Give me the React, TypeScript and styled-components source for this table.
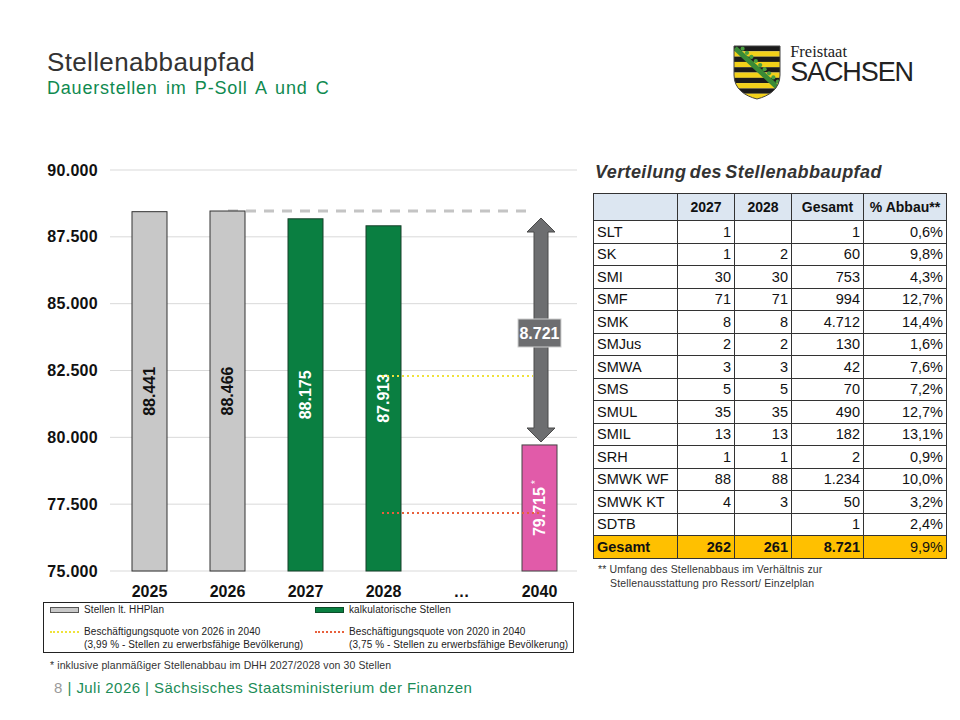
import styled, { createGlobalStyle } from "styled-components"

const GlobalStyle = createGlobalStyle`
  body {
    margin: 0;
    background: #fff;
    font-family: "Liberation Sans", Arial, sans-serif;
  }
`

const Page = styled.div`
  width: 960px;
  height: 720px;
  overflow: hidden;
  background: #fff;
  color: #333;
`

const Header = styled.header`
  height: 158px;
  box-sizing: border-box;
  padding: 47px 47px 0 47px;
  display: flex;
  justify-content: space-between;
  align-items: flex-start;
`

const TitleBlock = styled.div`
  display: flex;
  flex-direction: column;
`

const Title = styled.h1`
  margin: 0;
  font-size: 26px;
  line-height: 30px;
  font-weight: 400;
  letter-spacing: 0.35px;
  color: #333;
`

const Subtitle = styled.h2`
  margin: 0;
  font-size: 18px;
  line-height: 22px;
  font-weight: 400;
  letter-spacing: 0.8px;
  word-spacing: 2.5px;
  color: #0f8a50;
`

const Logo = styled.div`
  display: flex;
  align-items: flex-start;
  gap: 9px;
  margin-top: -2px;
`

const LogoText = styled.div`
  display: flex;
  flex-direction: column;
  color: #222;
`

const LogoSmall = styled.span`
  font-family: "Liberation Serif", serif;
  font-size: 16.5px;
  line-height: 13px;
`

const LogoBig = styled.span`
  margin-top: 3px;
  font-size: 27px;
  line-height: 23px;
  letter-spacing: -1.1px;
`

const Main = styled.main`
  display: flex;
  height: 521px;
  padding-left: 40px;
`

const ChartColumn = styled.div`
  width: 545px;
  display: flex;
  flex-direction: column;
`

const TableColumn = styled.div`
  width: 353px;
  margin-left: 8px;
  display: flex;
  flex-direction: column;
`

const ChartSvg = styled.svg`
  display: block;
  font-family: "Liberation Sans", Arial, sans-serif;
`

const AxisLabel = styled.text`
  font-size: 16px;
  font-weight: 700;
  fill: #111;
`

const BarLabel = styled.text<{ $light: boolean }>`
  font-size: 16px;
  font-weight: 700;
  fill: ${(p) => (p.$light ? "#fff" : "#111")};
`

const Legend = styled.div`
  margin: 2px 0 0 3px;
  width: 531px;
  height: 51px;
  box-sizing: border-box;
  border: 1.5px solid #222;
  display: grid;
  grid-template-columns: 265px 1fr;
  grid-template-rows: 13px 1fr;
  row-gap: 9px;
  padding: 0 0 0 6px;
  font-size: 10px;
  line-height: 13px;
  letter-spacing: 0.1px;
  color: #222;
  white-space: nowrap;
`

const LegendItem = styled.div`
  display: flex;
  align-items: flex-start;
  gap: 5px;
`

const Swatch = styled.span<{ $kind: "plan" | "calc" | "yellow" | "orange" }>`
  flex: none;
  width: 29px;
  box-sizing: border-box;
  margin-top: ${(p) => (p.$kind === "plan" || p.$kind === "calc" ? "4px" : "6px")};
  height: ${(p) => (p.$kind === "plan" || p.$kind === "calc" ? "6px" : "0")};
  background: ${(p) => (p.$kind === "plan" ? "#c8c8c8" : p.$kind === "calc" ? "#0a7f41" : "transparent")};
  border: ${(p) =>
    p.$kind === "plan"
      ? "1px solid #555"
      : p.$kind === "calc"
      ? "1px solid #0d4d2a"
      : "none"};
  border-top: ${(p) =>
    p.$kind === "yellow"
      ? "2px dotted #efe23a"
      : p.$kind === "orange"
      ? "2px dotted #e8603c"
      : undefined};
`

const Note = styled.div`
  margin-top: 6px;
  padding-left: 10px;
  font-size: 10.5px;
  line-height: 12px;
  letter-spacing: 0.1px;
  color: #333;
`

const TableTitle = styled.h3`
  margin: 3px 0 10px 2px;
  font-size: 18px;
  line-height: 22px;
  font-weight: 700;
  font-style: italic;
  letter-spacing: 0.4px;
  word-spacing: -2px;
  color: #333;
`

const Table = styled.table`
  width: 353px;
  border-collapse: collapse;
  table-layout: fixed;
  font-size: 14.5px;
  color: #111;
`

const Col = styled.col<{ $w: number }>`
  width: ${(p) => p.$w}px;
`

const HeadCell = styled.th`
  height: 26px;
  padding: 0 2px;
  border: 1px solid #333;
  background: #dce6f1;
  font-size: 14px;
  font-weight: 700;
  text-align: center;
  white-space: nowrap;
`

const Row = styled.tr<{ $total?: boolean }>`
  height: 22.5px;
  background: ${(p) => (p.$total ? "#ffc000" : "#fff")};
  font-weight: ${(p) => (p.$total ? 700 : 400)};
`

const Cell = styled.td<{ $left?: boolean; $plain?: boolean }>`
  padding: 0 3px;
  border: 1px solid #333;
  text-align: ${(p) => (p.$left ? "left" : "right")};
  font-weight: ${(p) => (p.$plain ? 400 : "inherit")};
  white-space: nowrap;
`

const TableNote = styled.div`
  margin-top: 4.5px;
  padding-left: 17px;
  text-indent: -12px;
  font-size: 10.5px;
  line-height: 13.5px;
  letter-spacing: 0.15px;
  color: #333;
`

const Footer = styled.footer`
  padding-left: 54px;
  font-size: 15px;
  line-height: 18px;
  letter-spacing: 0.45px;
  color: #1b8c57;
`

const PageNo = styled.span`
  color: #9a9a9a;
`

const Y0 = 571
const PX = 401 / 15000
const yOf = (v: number) => Y0 - (v - 75000) * PX
const fmt = (n: number) => String(n).replace(/\B(?=(\d{3})+(?!\d))/g, ".")

const TICKS = [90000, 87500, 85000, 82500, 80000, 77500, 75000]

type BarKind = "plan" | "calc" | "target"

const BARS: { year: string; value?: number; kind?: BarKind }[] = [
  { year: "2025", value: 88441, kind: "plan" },
  { year: "2026", value: 88466, kind: "plan" },
  { year: "2027", value: 88175, kind: "calc" },
  { year: "2028", value: 87913, kind: "calc" },
  { year: "…" },
  { year: "2040", value: 79715, kind: "target" },
]

const BAR_FILL: Record<BarKind, string> = {
  plan: "#c8c8c8",
  calc: "#0a7f41",
  target: "#e15ba9",
}

const BAR_STROKE: Record<BarKind, string> = {
  plan: "#333",
  calc: "#17402a",
  target: "#444",
}

const ROWS: string[][] = [
  ["SLT", "1", "", "1", "0,6%"],
  ["SK", "1", "2", "60", "9,8%"],
  ["SMI", "30", "30", "753", "4,3%"],
  ["SMF", "71", "71", "994", "12,7%"],
  ["SMK", "8", "8", "4.712", "14,4%"],
  ["SMJus", "2", "2", "130", "1,6%"],
  ["SMWA", "3", "3", "42", "7,6%"],
  ["SMS", "5", "5", "70", "7,2%"],
  ["SMUL", "35", "35", "490", "12,7%"],
  ["SMIL", "13", "13", "182", "13,1%"],
  ["SRH", "1", "1", "2", "0,9%"],
  ["SMWK WF", "88", "88", "1.234", "10,0%"],
  ["SMWK KT", "4", "3", "50", "3,2%"],
  ["SDTB", "", "", "1", "2,4%"],
]

function Wappen() {
  const stripes = Array.from({ length: 10 }, (_, i) => i)
  const leaves = Array.from({ length: 9 }, (_, i) => 0.1 + i * 0.1)
  return (
    <svg width="48" height="55" viewBox="0 0 48 55">
      <defs>
        <clipPath id="shield">
          <path d="M1 1 H47 V30 C47 44 36 51 24 54 C12 51 1 44 1 30 Z" />
        </clipPath>
      </defs>
      <g clipPath="url(#shield)">
        {stripes.map((i) => (
          <rect key={i} x="0" y={1 + i * 5.3} width="48" height="5.4" fill={i % 2 === 0 ? "#1b1b1b" : "#f3d11a"} />
        ))}
        <line x1="2" y1="3" x2="46" y2="44" stroke="#3a8a36" strokeWidth="5" />
        {leaves.map((t) => (
          <circle key={t} cx={2 + 44 * t + 3.2} cy={3 + 41 * t - 3.4} r="2.1" fill="#4a9e3f" />
        ))}
      </g>
      <path d="M1 1 H47 V30 C47 44 36 51 24 54 C12 51 1 44 1 30 Z" fill="none" stroke="#444" strokeWidth="1" />
    </svg>
  )
}

function Chart() {
  return (
    <ChartSvg width="545" height="442" viewBox="40 158 545 442">
      {TICKS.map((t) => (
        <g key={t}>
          <line x1="110" x2="577" y1={yOf(t)} y2={yOf(t)} stroke="#d9d9d9" strokeWidth="1" />
          <AxisLabel x="98" y={yOf(t) + 5.5} textAnchor="end" letterSpacing="0.3">
            {fmt(t)}
          </AxisLabel>
        </g>
      ))}

      <line x1="228" x2="528" y1="211" y2="211" stroke="#c4c4c4" strokeWidth="3" strokeDasharray="10 8" />

      {BARS.map((b, i) => {
        const cx = 149.5 + 78 * i
        if (b.value === undefined || !b.kind) return null
        const top = yOf(b.value)
        const mid = (top + Y0) / 2
        return (
          <g key={b.year}>
            <rect x={cx - 17.5} y={top} width="35" height={Y0 - top} fill={BAR_FILL[b.kind]} stroke={BAR_STROKE[b.kind]} strokeWidth="1" />
            <BarLabel
              $light={b.kind !== "plan"}
              x={cx}
              y={mid}
              dy="0.36em"
              textAnchor="middle"
              transform={`rotate(-90 ${cx} ${mid})`}
            >
              {fmt(b.value)}
              {b.kind === "target" && (
                <tspan dx="3" dy="-6" fontSize="11" fontWeight="400">
                  *
                </tspan>
              )}
            </BarLabel>
          </g>
        )
      })}

      <line x1="382" x2="533" y1="376" y2="376" stroke="#efe23a" strokeWidth="2" strokeDasharray="2 3" />
      <line x1="382" x2="541" y1="513" y2="513" stroke="#e8603c" strokeWidth="2" strokeDasharray="2 3" />

      <polygon
        points="541,218 555,232 548,232 548,428 555,428 541,442 527,428 534,428 534,232 527,232"
        fill="#6d6e70"
        stroke="#4a4a4a"
        strokeWidth="1"
      />
      <rect x="518" y="319" width="43" height="28" fill="#6d6e70" stroke="#d0d0d0" strokeWidth="1" />
      <BarLabel $light x="539.5" y="333" dy="0.36em" textAnchor="middle">
        8.721
      </BarLabel>

      {BARS.map((b, i) => (
        <AxisLabel key={b.year} x={149.5 + 78 * i} y="597" textAnchor="middle">
          {b.year}
        </AxisLabel>
      ))}
    </ChartSvg>
  )
}

export default function App() {
  return (
    <Page>
      <GlobalStyle />
      <Header>
        <TitleBlock>
          <Title>Stellenabbaupfad</Title>
          <Subtitle>Dauerstellen im P-Soll A und C</Subtitle>
        </TitleBlock>
        <Logo>
          <Wappen />
          <LogoText>
            <LogoSmall>Freistaat</LogoSmall>
            <LogoBig>SACHSEN</LogoBig>
          </LogoText>
        </Logo>
      </Header>

      <Main>
        <ChartColumn>
          <Chart />
          <Legend>
            <LegendItem>
              <Swatch $kind="plan" />
              <span>Stellen lt. HHPlan</span>
            </LegendItem>
            <LegendItem>
              <Swatch $kind="calc" />
              <span>kalkulatorische Stellen</span>
            </LegendItem>
            <LegendItem>
              <Swatch $kind="yellow" />
              <span>
                Beschäftigungsquote von 2026 in 2040
                <br />
                (3,99 % - Stellen zu erwerbsfähige Bevölkerung)
              </span>
            </LegendItem>
            <LegendItem>
              <Swatch $kind="orange" />
              <span>
                Beschäftigungsquote von 2020 in 2040
                <br />
                (3,75 % - Stellen zu erwerbsfähige Bevölkerung)
              </span>
            </LegendItem>
          </Legend>
          <Note>* inklusive planmäßiger Stellenabbau im DHH 2027/2028 von 30 Stellen</Note>
        </ChartColumn>

        <TableColumn>
          <TableTitle>Verteilung des Stellenabbaupfad</TableTitle>
          <Table>
            <colgroup>
              <Col $w={84} />
              <Col $w={57} />
              <Col $w={57} />
              <Col $w={72} />
              <Col $w={83} />
            </colgroup>
            <thead>
              <tr>
                <HeadCell />
                <HeadCell>2027</HeadCell>
                <HeadCell>2028</HeadCell>
                <HeadCell>Gesamt</HeadCell>
                <HeadCell>% Abbau**</HeadCell>
              </tr>
            </thead>
            <tbody>
              {ROWS.map((r) => (
                <Row key={r[0]}>
                  <Cell $left>{r[0]}</Cell>
                  <Cell>{r[1]}</Cell>
                  <Cell>{r[2]}</Cell>
                  <Cell>{r[3]}</Cell>
                  <Cell>{r[4]}</Cell>
                </Row>
              ))}
              <Row $total>
                <Cell $left>Gesamt</Cell>
                <Cell>262</Cell>
                <Cell>261</Cell>
                <Cell>8.721</Cell>
                <Cell $plain>9,9%</Cell>
              </Row>
            </tbody>
          </Table>
          <TableNote>
            ** Umfang des Stellenabbaus im Verhältnis zur
            <br />
            Stellenausstattung pro Ressort/ Einzelplan
          </TableNote>
        </TableColumn>
      </Main>

      <Footer>
        <PageNo>8</PageNo> | Juli 2026 | Sächsisches Staatsministerium der Finanzen
      </Footer>
    </Page>
  )
}
